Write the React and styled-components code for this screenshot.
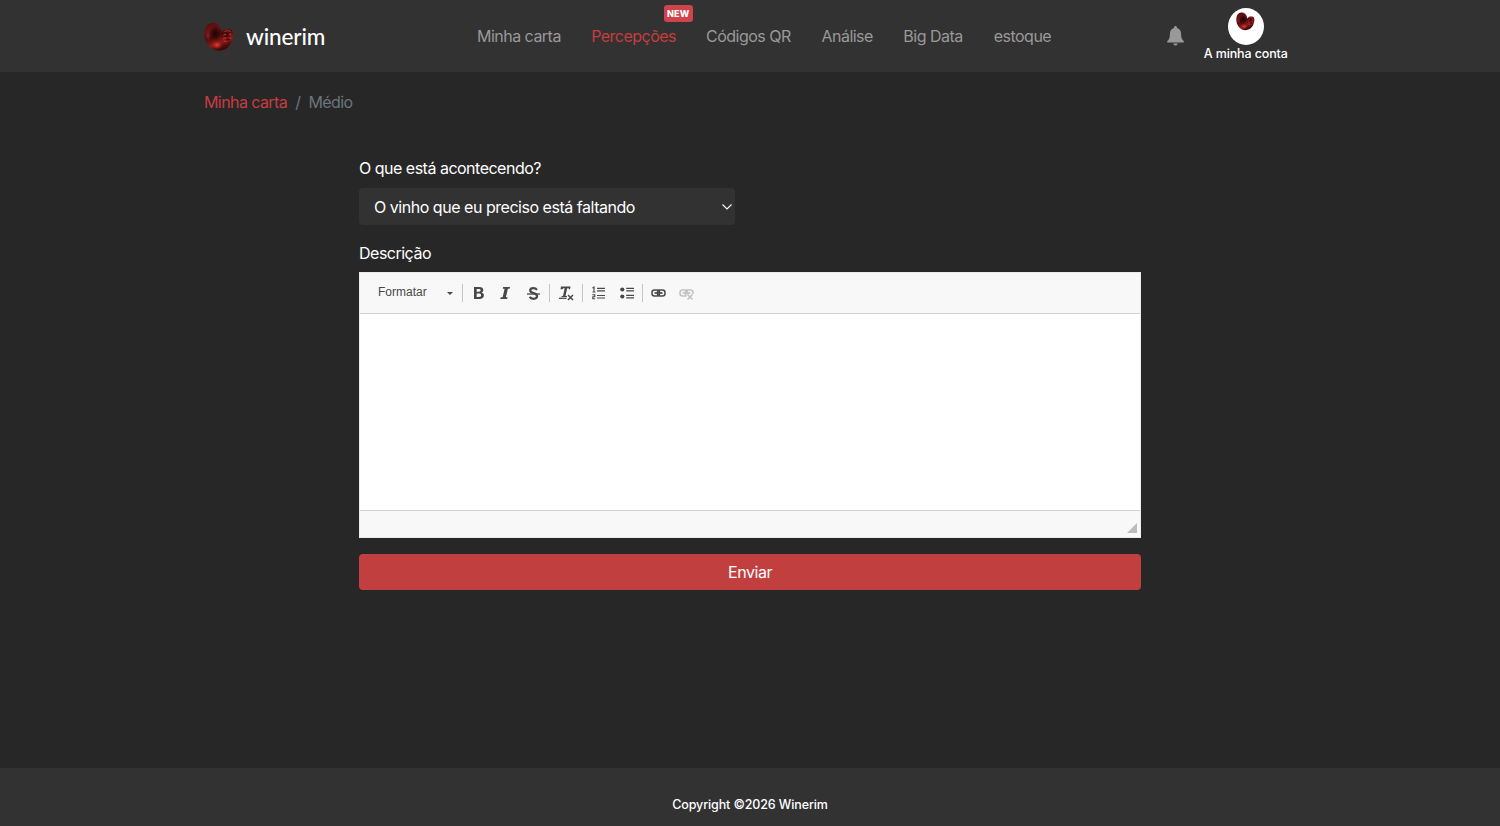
import React, { useState } from 'react';
import styled, { createGlobalStyle, ThemeProvider } from 'styled-components';

const theme = {
  bgd: '#272727',
  panelBgd: '#323232',
  primary: '#c23f3f',
  link: '#c73c3f',
  navColor: '#999999',
  mutedColor: '#6c757d',
  editorBar: '#f8f8f8',
  editorBorder: '#d1d1d1',
  editorIcon: '#484848'
};

const GlobalStyle = createGlobalStyle`
  * {
    box-sizing: border-box;
  }

  body {
    margin: 0;
    background-color: ${theme.bgd};
    color: #ffffff;
    font-family: Inter, 'Liberation Sans', sans-serif;
    font-size: 16px;
    line-height: 24px;
  }
`;

const Page = styled.div`
  display: flex;
  flex-direction: column;
  min-height: 826px;
`;

const Header = styled.header`
  display: flex;
  align-items: flex-start;
  height: 72px;
  padding: 0 204px;
  background-color: ${props => props.theme.panelBgd};
`;

const Brand = styled.a`
  display: flex;
  align-items: center;
  width: 273px;
  height: 73px;

  svg {
    margin-right: 12px;
  }
`;

const BrandName = styled.span`
  font-family: Lato, sans-serif;
  font-size: 22.5px;
  font-weight: 500;
  letter-spacing: -0.1px;
  line-height: 28px;
`;

const Nav = styled.nav`
  display: flex;
  gap: 30.4px;
  padding-top: 24px;
`;

const NavLink = styled.a`
  position: relative;
  width: ${props => props.$width}px;
  color: ${props => (props.$active ? props.theme.link : props.theme.navColor)};
  letter-spacing: -0.52px;
  white-space: nowrap;
`;

const NewBadge = styled.span`
  position: absolute;
  top: -19px;
  right: -17px;
  width: 29px;
  height: 17px;
  border-radius: 3px;
  background-color: #cf444b;
  color: #ffffff;
  font-size: 9px;
  font-weight: 800;
  letter-spacing: 0.2px;
  line-height: 17px;
  text-align: center;
`;

const Bell = styled.button`
  display: flex;
  margin: 26px 0 0 115px;
  padding: 0;
  border: 0;
  background: none;
`;

const Account = styled.a`
  display: flex;
  flex-direction: column;
  align-items: center;
  width: 84px;
  margin: 8px 0 0 20px;
  font-size: 12.5px;
  font-weight: 500;
  letter-spacing: -0.12px;
  line-height: 18px;
  white-space: nowrap;
`;

const Avatar = styled.span`
  display: flex;
  justify-content: center;
  width: 36px;
  height: 37px;
  padding-top: 4px;
  border-radius: 50%;
  background-color: #ffffff;
`;

const Breadcrumb = styled.div`
  display: flex;
  gap: 8px;
  padding: 18px 204px 0;
  color: ${props => props.theme.mutedColor};
  letter-spacing: -0.58px;

  a {
    color: ${props => props.theme.link};
  }
`;

const Form = styled.form`
  display: flex;
  flex: 1;
  flex-direction: column;
  width: 782px;
  margin: 42px auto 0 359px;
`;

const Label = styled.label`
  margin-bottom: ${props => props.$gap}px;
  letter-spacing: -0.5px;
`;

const Select = styled.div`
  display: flex;
  align-items: center;
  justify-content: space-between;
  width: 376px;
  height: 37px;
  margin-bottom: 16px;
  padding: 0 3px 0 15px;
  border-radius: 4px;
  background-color: ${props => props.theme.panelBgd};
  letter-spacing: -0.47px;
`;

const Editor = styled.div`
  display: flex;
  flex-direction: column;
  height: 266px;
  border: 1px solid #ececec;
  background-color: #ffffff;
`;

const Toolbar = styled.div`
  display: flex;
  align-items: center;
  height: 41px;
  padding-left: 18px;
  border-bottom: 1px solid ${props => props.theme.editorBorder};
  background-color: ${props => props.theme.editorBar};
`;

const FormatCombo = styled.div`
  display: flex;
  align-items: center;
  justify-content: space-between;
  width: 75px;
  color: ${props => props.theme.editorIcon};
  font-family: 'Liberation Sans', Arial, sans-serif;
  font-size: 12px;
  line-height: 20px;

  span {
    padding-bottom: 2px;
  }
`;

const Separator = styled.span`
  width: 1px;
  height: 18px;
  margin: 0 ${props => props.$after}px 0 ${props => props.$before}px;
  background-color: #c4c4c4;
`;

const ToolButton = styled.button`
  display: flex;
  margin: 0 ${props => props.$gap || 0}px 0 0;
  padding: 0;
  border: 0;
  background: none;
  opacity: ${props => (props.disabled ? 0.3 : 1)};
`;

const EditorContent = styled.div`
  flex: 1;
  outline: none;
`;

const EditorFooter = styled.div`
  display: flex;
  align-items: flex-end;
  justify-content: flex-end;
  height: 27px;
  padding: 0 3px 4px 0;
  border-top: 1px solid ${props => props.theme.editorBorder};
  background-color: ${props => props.theme.editorBar};
`;

const SubmitButton = styled.button`
  height: 36px;
  margin-top: 16px;
  padding: 0;
  border: 0;
  border-radius: 4px;
  background-color: ${props => props.theme.primary};
  color: #ffffff;
  font-family: inherit;
  font-size: 16px;
  letter-spacing: -0.45px;
`;

const Footer = styled.footer`
  height: 58px;
  padding-top: 25px;
  background-color: ${props => props.theme.panelBgd};
  font-size: 12.5px;
  font-weight: 500;
  letter-spacing: -0.12px;
  text-align: center;
`;

const LogoMark = ({id, size}) => (
  <svg width={size} height={size} viewBox="0 0 30 30">
    <defs>
      <linearGradient id={`${id}-body`} x1="0" y1="0" x2="0.4" y2="1">
        <stop offset="0" stopColor="#4b0d0d" />
        <stop offset="0.3" stopColor="#6c1312" />
        <stop offset="0.55" stopColor="#470b0b" />
        <stop offset="0.8" stopColor="#8f1a19" />
        <stop offset="1" stopColor="#3d0909" />
      </linearGradient>
      <radialGradient id={`${id}-glow`}>
        <stop offset="0" stopColor="#e8413b" />
        <stop offset="1" stopColor="#a51c1b" stopOpacity="0" />
      </radialGradient>
      <radialGradient id={`${id}-shade`}>
        <stop offset="0" stopColor="#1d0404" />
        <stop offset="1" stopColor="#1d0404" stopOpacity="0" />
      </radialGradient>
    </defs>
    <path
      d="M8 .8C13 .3 16.800 3.500 17.600 9c.3 1.300.7 1.500 1.200.4C20 7.600 22 7 24.500 7.200c3.700.2 5 2.800 4.500 6.800C28.200 22 23 28.700 15.500 28.700 7 28.700.8 21.500.5 13 .3 6 3 1.300 8 .8z"
      fill={`url(#${id}-body)`}
    />
    <ellipse cx="11" cy="11" rx="6" ry="8" fill={`url(#${id}-shade)`} />
    <ellipse cx="13" cy="23" rx="6" ry="4.500" fill={`url(#${id}-glow)`} />
    <ellipse cx="4" cy="14" rx="3" ry="6" fill={`url(#${id}-glow)`} opacity="0.4" />
    <path
      d="M20.500 9.500c2-1 4-1 6 0M19.500 13l2.500-1M25 12.500l2.500-.5M19 17l3-1.500M25 16l2 .5M20 19.500l3-.5"
      fill="none"
      stroke="#cf2b2d"
      strokeWidth="1"
    />
    <path d="M22 11l2 1.500M21 14.500l4-.5M22 18l4-1" stroke="#300606" strokeWidth="1.200" fill="none" />
  </svg>
);

const BellIcon = () => (
  <svg width="17" height="20" viewBox="0 0 17 20" fill="#999999">
    <path d="M8.500 0c.9 0 1.400.6 1.400 1.400v.7c2.700.7 4.200 2.900 4.200 5.700 0 4 .6 5.600 2.600 7.300v1.400H.3v-1.400c2-1.700 2.600-3.300 2.600-7.300 0-2.800 1.500-5 4.200-5.700v-.7C7.100.6 7.600 0 8.500 0z" />
    <path d="M6.300 17.400h4.400a2.200 2 0 0 1-4.400 0z" />
  </svg>
);

const BoldIcon = () => (
  <svg width="10" height="12" viewBox="0 0 10 12">
    <path
      d="M0 0h5.200C8 0 9.300 1.100 9.300 3c0 1.300-.7 2.200-1.900 2.600C9 6 9.900 7 9.900 8.500 9.900 10.800 8.200 12 5.500 12H0zm2.700 2v2.700h2c1.300 0 1.900-.5 1.900-1.400S6 2 4.700 2zm0 4.600V10H5c1.400 0 2.100-.6 2.100-1.700S6.400 6.600 5 6.600z"
      fill="#484848"
      fillRule="evenodd"
    />
  </svg>
);

const ItalicIcon = () => (
  <svg width="10" height="12" viewBox="0 0 10 12">
    <path d="M3.200 0H10l-.4 1.700H7.900L5.900 10.300h1.700L7.200 12H.3l.4-1.700h1.900l2-8.600H2.800z" fill="#484848" />
  </svg>
);

const StrikeIcon = () => (
  <svg width="13" height="13" viewBox="0 0 13 13" fill="none" stroke="#484848">
    <path d="M10 2.900C9.100 1.700 7.800 1.200 6.400 1.200c-1.800 0-3.200.8-3.200 2.300 0 3.300 6.900 2 6.900 5.600 0 1.700-1.500 2.700-3.500 2.700-1.700 0-3.100-.6-4-1.900" strokeWidth="2.200" />
    <path d="M0 7h13" strokeWidth="1.300" />
  </svg>
);

const RemoveFormatIcon = () => (
  <svg width="15" height="15" viewBox="0 0 15 15">
    <path d="M2 .5h9.500L11 3.300h-1.200l-.1-1H8.200L6.500 10H8v1H2.500v-1H4l1.700-7.700H4.200l-.7 1H2.200L1.500 3.300z" fill="#484848" />
    <path d="M0 12.300h7.500" stroke="#484848" strokeWidth="1.300" />
    <path d="M9 9l5 5m0-5l-5 5" stroke="#484848" strokeWidth="1.500" />
  </svg>
);

const NumberedListIcon = () => (
  <svg width="13" height="14" viewBox="0 0 13 14" fill="none" stroke="#484848">
    <path d="M.5 2L2 1v5M.5 6h3M.3 8.700h2.500v2H.8v2.100h2.400" strokeWidth="1.100" />
    <path d="M5 2.300h8M5 4.800h8M5 9.500h8M5 12h8" strokeWidth="1.200" />
  </svg>
);

const BulletedListIcon = () => (
  <svg width="14" height="12" viewBox="0 0 14 12">
    <circle cx="2.300" cy="2.500" r="2.100" fill="#484848" />
    <circle cx="2.300" cy="9.500" r="2.100" fill="#484848" />
    <path d="M6.200 1.300H14M6.200 3.800H14M6.200 8.300H14M6.200 10.800H14" stroke="#484848" strokeWidth="1.200" />
  </svg>
);

const LinkIcon = ({broken}) => (
  <svg width="15" height="13" viewBox="0 0 15 13" fill="none" stroke="#484848">
    <rect x="1" y="3" width="7.500" height="6" rx="2.500" strokeWidth="1.500" />
    <rect x="6.500" y="3" width="7.500" height="6" rx="2.500" strokeWidth="1.500" />
    <path d="M3.500 6h8" strokeWidth="1.700" />
    {broken && (
      <React.Fragment>
        <path d="M7.500 7H15v6H7.500z" fill="#f8f8f8" stroke="none" />
        <path d="M8.500 7.500l5 5m0-5l-5 5" strokeWidth="1.600" />
      </React.Fragment>
    )}
  </svg>
);

const links = [
  {label: 'Minha carta', width: 83.8},
  {label: 'Percepções', width: 84.5, active: true, isNew: true},
  {label: 'Códigos QR', width: 85},
  {label: 'Análise', width: 51.5},
  {label: 'Big Data', width: 60},
  {label: 'estoque', width: 58}
];

const RichEditor = () => (
  <Editor>
    <Toolbar>
      <FormatCombo>
        <span>Formatar</span>
        <svg width="6" height="3" viewBox="0 0 6 3">
          <path d="M0 0h6L3 3z" fill="#484848" />
        </svg>
      </FormatCombo>
      <Separator $before={9} $after={11} />
      <ToolButton type="button" aria-label="Negrito" $gap={16}><BoldIcon /></ToolButton>
      <ToolButton type="button" aria-label="Itálico" $gap={17}><ItalicIcon /></ToolButton>
      <ToolButton type="button" aria-label="Tachado"><StrikeIcon /></ToolButton>
      <Separator $before={9} $after={9} />
      <ToolButton type="button" aria-label="Remover formatação"><RemoveFormatIcon /></ToolButton>
      <Separator $before={8} $after={9} />
      <ToolButton type="button" aria-label="Lista numerada" $gap={15}><NumberedListIcon /></ToolButton>
      <ToolButton type="button" aria-label="Lista sem números"><BulletedListIcon /></ToolButton>
      <Separator $before={8} $after={8} />
      <ToolButton type="button" aria-label="Inserir link" $gap={13}><LinkIcon /></ToolButton>
      <ToolButton type="button" aria-label="Remover link" disabled><LinkIcon broken /></ToolButton>
    </Toolbar>
    <EditorContent contentEditable suppressContentEditableWarning />
    <EditorFooter>
      <svg width="10" height="10" viewBox="0 0 10 10">
        <path d="M10 0v10H0z" fill="#bcbcbc" />
      </svg>
    </EditorFooter>
  </Editor>
);

export default function App() {
  const [reason] = useState('O vinho que eu preciso está faltando');

  return (
    <ThemeProvider theme={theme}>
      <GlobalStyle />
      <Page>
        <Header>
          <Brand>
            <LogoMark id="brand" size={30} />
            <BrandName>winerim</BrandName>
          </Brand>
          <Nav>
            {links.map(link => (
              <NavLink key={link.label} $active={link.active} $width={link.width}>
                {link.label}
                {link.isNew && <NewBadge>NEW</NewBadge>}
              </NavLink>
            ))}
          </Nav>
          <Bell type="button" aria-label="Notificações"><BellIcon /></Bell>
          <Account>
            <Avatar><LogoMark id="avatar" size={19} /></Avatar>
            <span>A minha conta</span>
          </Account>
        </Header>
        <Breadcrumb>
          <a>Minha carta</a>
          <span>/</span>
          <span>Médio</span>
        </Breadcrumb>
        <Form onSubmit={e => e.preventDefault()}>
          <Label $gap={8}>O que está acontecendo?</Label>
          <Select>
            <span>{reason}</span>
            <svg width="10" height="6" viewBox="0 0 10 6" fill="none" stroke="#ffffff">
              <path d="M.5.5L5 5 9.500.5" strokeWidth="1.100" />
            </svg>
          </Select>
          <Label $gap={7}>Descrição</Label>
          <RichEditor />
          <SubmitButton type="submit">Enviar</SubmitButton>
        </Form>
        <Footer>Copyright ©2026 Winerim</Footer>
      </Page>
    </ThemeProvider>
  );
}
